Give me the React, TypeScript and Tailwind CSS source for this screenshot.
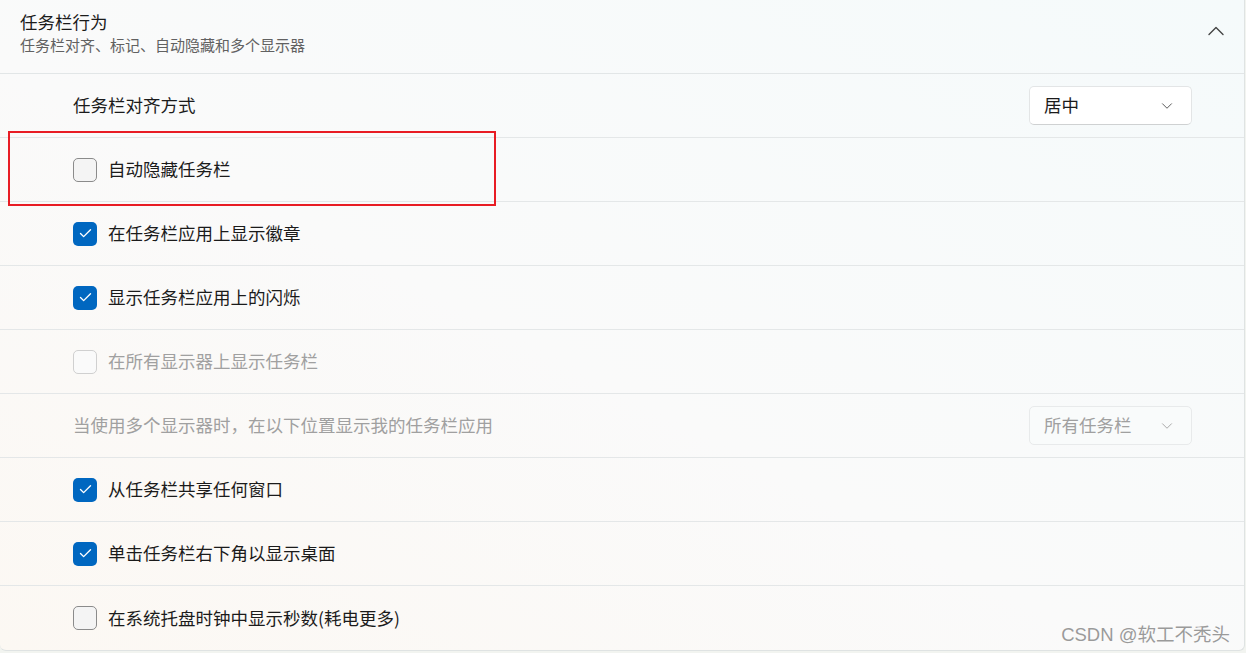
import { ChevronDown, ChevronUp, Check } from "lucide-react";

const font = { fontFamily: '"Noto Sans CJK SC", "Noto Sans", sans-serif' };

type Row =
  | { kind: "select"; label: string; value: string; disabled?: boolean }
  | { kind: "check"; label: string; checked: boolean; disabled?: boolean };

const rows: Row[] = [
  { kind: "select", label: "任务栏对齐方式", value: "居中" },
  { kind: "check", label: "自动隐藏任务栏", checked: false },
  { kind: "check", label: "在任务栏应用上显示徽章", checked: true },
  { kind: "check", label: "显示任务栏应用上的闪烁", checked: true },
  { kind: "check", label: "在所有显示器上显示任务栏", checked: false, disabled: true },
  { kind: "select", label: "当使用多个显示器时，在以下位置显示我的任务栏应用", value: "所有任务栏", disabled: true },
  { kind: "check", label: "从任务栏共享任何窗口", checked: true },
  { kind: "check", label: "单击任务栏右下角以显示桌面", checked: true },
  { kind: "check", label: "在系统托盘时钟中显示秒数(耗电更多)", checked: false },
];

function Box({ checked, disabled }: { checked: boolean; disabled?: boolean }) {
  if (checked) {
    return (
      <span className="flex h-[24px] w-[24px] items-center justify-center rounded-[5px] bg-[#0067c0]">
        <Check size={15} strokeWidth={2.2} className="text-white" />
      </span>
    );
  }
  return (
    <span
      className={
        disabled
          ? "h-[24px] w-[24px] rounded-[5px] border border-[#d0d0d0] bg-[#fafafa]"
          : "h-[24px] w-[24px] rounded-[5px] border border-[#8b8b8b] bg-[#f4f4f4]"
      }
    />
  );
}

function Select({ value, disabled }: { value: string; disabled?: boolean }) {
  return (
    <div
      className={
        disabled
          ? "flex h-[39px] w-[163px] items-center justify-between rounded-[5px] border border-[#e8eaeb] bg-[#f9fbfb] pl-[14px] pr-[15px] text-[17.5px] text-[#a0a0a0]"
          : "flex h-[39px] w-[163px] items-center justify-between rounded-[5px] border border-[#e3e5e6] border-b-[#cfd1d2] bg-white pl-[14px] pr-[15px] text-[17.5px] text-[#1b1b1b]"
      }
    >
      <span>{value}</span>
      <ChevronDown size={18} strokeWidth={1.3} className={disabled ? "text-[#a8a8a8]" : "text-[#555]"} />
    </div>
  );
}

export default function App() {
  return (
    <div style={font} className="relative h-[653px] w-[1246px] overflow-hidden bg-[#f2f4f0]">
      <div className="w-[1245px] overflow-hidden rounded-b-[6px] border-r border-b border-[#dfe3e3] bg-[linear-gradient(to_top_right,#fcf8f3,#fafafa_45%,#f5fafb)]">
        <div className="flex h-[74px] items-start justify-between border-b border-[#e2e6e7] pl-[20px] pr-[14px] pt-[11px]">
          <div className="flex flex-col">
            <span className="text-[17.5px] leading-[22px] text-[#1b1b1b]">任务栏行为</span>
            <span className="mt-[2px] text-[15px] leading-[20px] text-[#616161]">任务栏对齐、标记、自动隐藏和多个显示器</span>
          </div>
          <ChevronUp size={28} strokeWidth={1.2} className="mt-[6px] text-[#444]" />
        </div>
        {rows.map((r, i) => (
          <div
            key={i}
            className={
              "flex h-[64px] items-center justify-between pl-[73px] pr-[52px]" +
              (i < rows.length - 1 ? " border-b border-[#e4e7e8]" : "")
            }
          >
            {r.kind === "check" ? (
              <div className="flex items-center gap-[11px]">
                <Box checked={r.checked} disabled={r.disabled} />
                <span className={"text-[17.5px] " + (r.disabled ? "text-[#a0a0a0]" : "text-[#1b1b1b]")}>{r.label}</span>
              </div>
            ) : (
              <>
                <span className={"text-[17.5px] " + (r.disabled ? "text-[#a0a0a0]" : "text-[#1b1b1b]")}>{r.label}</span>
                <Select value={r.value} disabled={r.disabled} />
              </>
            )}
          </div>
        ))}
      </div>

      <div className="absolute left-[8px] top-[131px] h-[75px] w-[488px] border-2 border-[#e81c24]" />

      <div
        className="absolute right-[16px] top-[621px] text-[18.5px] text-[#9a9a9a] [text-shadow:0_0_1px_#fff]"
        style={{ fontFamily: '"Liberation Sans", "Noto Sans CJK SC", sans-serif' }}
      >
        CSDN @软工不秃头
      </div>
    </div>
  );
}
